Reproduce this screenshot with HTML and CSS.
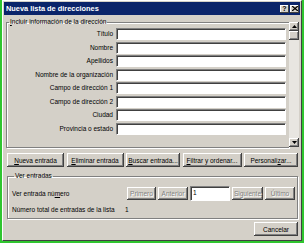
FILE: index.html
```html
<!DOCTYPE html>
<html lang="es">

<head>
  <meta charset="UTF-8">
  <title>Nueva lista de direcciones</title>
  <link rel="stylesheet" href="styles.css">
</head>

<body>
  <div class="window">
    <div class="dialog">
      <div class="titlebar">
        <span class="title">Nueva lista de direcciones</span>
        <div class="caption-btns">
          <span class="cbtn">?</span>
          <span class="cbtn cbtn-close">
            <svg width="6" height="5" viewBox="0 0 6 5"><path d="M0 0L6 5M6 0L0 5" stroke="#000" stroke-width="1.3"/></svg>
          </span>
        </div>
      </div>

      <div class="content">
        <div class="pane">
          <fieldset class="group fields">
            <legend><u>I</u>ncluir información de la dirección</legend>
            <div class="field-grid">
              <label>Título</label><span class="input"></span>
              <label>Nombre</label><span class="input"></span>
              <label>Apellidos</label><span class="input"></span>
              <label>Nombre de la organización</label><span class="input"></span>
              <label>Campo de dirección 1</label><span class="input"></span>
              <label>Campo de dirección 2</label><span class="input"></span>
              <label>Ciudad</label><span class="input"></span>
              <label>Provincia o estado</label><span class="input"></span>
            </div>
          </fieldset>
          <div class="scrollbar">
            <span class="sbtn"><svg width="5" height="3" viewBox="0 0 5 3"><path d="M0 3L2.5 0L5 3Z" fill="#000"/></svg></span>
            <span class="thumb"></span>
            <span class="track"></span>
            <span class="sbtn"><svg width="5" height="3" viewBox="0 0 5 3"><path d="M0 0L2.5 3L5 0Z" fill="#000"/></svg></span>
          </div>
        </div>

        <div class="actions">
          <button class="btn w-nueva"><u>N</u>ueva entrada</button>
          <button class="btn w-elim"><u>E</u>liminar entrada</button>
          <button class="btn w-buscar"><u>B</u>uscar entrada...</button>
          <button class="btn w-filtrar"><u>F</u>iltrar y ordenar...</button>
          <button class="btn w-pers">Personali<u>z</u>ar...</button>
        </div>

        <fieldset class="group view">
          <legend>Ver entradas</legend>
          <div class="nav-row">
            <span class="nav-label">Ver entrada nú<u>m</u>ero</span>
            <button class="btn disabled w-prim">Primero</button>
            <button class="btn disabled w-ant">Anterior</button>
            <span class="input num-input">1</span>
            <button class="btn disabled w-sig">Siguiente</button>
            <button class="btn disabled w-ult">Último</button>
          </div>
          <div class="total-row">
            <span class="nav-label">Número total de entradas de la lista</span>
            <span>1</span>
          </div>
        </fieldset>

        <div class="footer">
          <button class="btn w-cancel">Cancelar</button>
        </div>
      </div>
    </div>
  </div>
</body>

</html>
```

FILE: styles.css
```css
* {
  box-sizing: border-box;
  margin: 0;
  padding: 0;
  font-family: "Liberation Sans", Arial, sans-serif;
}

body {
  width: 304px;
  height: 243px;
  overflow: hidden;
  background-color: #d4d0c8;
  color: #000000;
  font-size: 6.5px;
  line-height: 8px;
}

.window {
  height: 243px;
  border: 2px solid #2fc52f;
  border-top: none;
}

.dialog {
  height: 100%;
  border: 1px solid;
  border-color: #ffffff #404040 #404040 #ffffff;
  padding: 1px;
  background-color: #d4d0c8;
  display: flex;
  flex-direction: column;
}

.titlebar {
  height: 13px;
  background-color: #0a246a;
  display: flex;
  align-items: center;
  justify-content: space-between;
  padding: 0 1px 0 2px;
}

.title {
  color: #ffffff;
  font-size: 7.4px;
  font-weight: bold;
}

.caption-btns {
  display: flex;
  gap: 1px;
}

.cbtn {
  width: 9px;
  height: 8px;
  background-color: #d4d0c8;
  box-shadow: inset -1px -1px #404040, inset 1px 1px #ffffff;
  font-size: 7px;
  font-weight: bold;
  line-height: 8px;
  text-align: center;
  display: flex;
  align-items: center;
  justify-content: center;
}

.content {
  padding: 3px 1px 0 1px;
  display: flex;
  flex-direction: column;
}

/* scrolling field pane */

.pane {
  height: 130px;
  display: flex;
}

.group {
  border: 1px solid #808080;
  box-shadow: inset 1px 1px #ffffff, 1px 1px #ffffff;
}

.group legend {
  margin-left: 2px;
  padding: 0 1px;
  line-height: 8px;
}

.fields {
  flex: 1;
  margin-left: 1px;
  border-right: none;
  padding-top: 2px;
  overflow: hidden;
}

.field-grid {
  display: grid;
  grid-template-columns: 106px 170px;
  column-gap: 3px;
  row-gap: 1.5px;
  grid-auto-rows: 12px;
  align-items: center;
}

.field-grid label {
  text-align: right;
}

.input {
  display: block;
  height: 12px;
  background-color: #ffffff;
  border: 1px solid;
  border-color: #808080 #ffffff #ffffff #808080;
  box-shadow: inset 1px 1px #404040;
}

.scrollbar {
  width: 10px;
  margin-top: 4px;
  margin-bottom: 1px;
  display: flex;
  flex-direction: column;
}

.sbtn,
.thumb {
  height: 9px;
  flex-shrink: 0;
  background-color: #d4d0c8;
  box-shadow: inset -1px -1px #404040, inset 1px 1px #ffffff, inset -2px -2px #808080;
  display: flex;
  align-items: center;
  justify-content: center;
}

.track {
  flex: 1;
  background-color: #e8e6e1;
}

/* buttons */

.btn {
  height: 14px;
  background-color: #d4d0c8;
  border: none;
  font-size: 6.5px;
  color: #000000;
  box-shadow: inset -1px -1px #404040, inset 1px 1px #ffffff, inset -2px -2px #808080;
}

.btn.disabled {
  color: #808080;
  text-shadow: 1px 1px #ffffff;
}

.actions {
  margin-top: 5px;
  padding: 0 1px 0 2px;
  display: flex;
  justify-content: space-between;
}

.w-nueva { width: 57px; }
.w-elim { width: 57px; }
.w-buscar { width: 54px; }
.w-filtrar { width: 59px; }
.w-pers { width: 54px; }

/* ver entradas */

.view {
  margin: 5px 1px 0 2px;
  height: 47px;
  padding: 6px 0 0 4px;
}

.nav-row {
  display: flex;
  align-items: center;
  gap: 2px;
}

.nav-label {
  width: 113px;
}

.nav-row .btn {
  height: 13px;
}

.w-prim { width: 29px; }
.w-ant { width: 30px; }
.w-sig { width: 31px; }
.w-ult { width: 30px; }

.num-input {
  width: 40px;
  height: 15px;
  padding: 2px 0 0 2px;
}

.total-row {
  margin-top: 5px;
  display: flex;
}

.footer {
  margin-top: 3px;
  padding-right: 1px;
  display: flex;
  justify-content: flex-end;
}

.w-cancel {
  width: 44px;
}
```
